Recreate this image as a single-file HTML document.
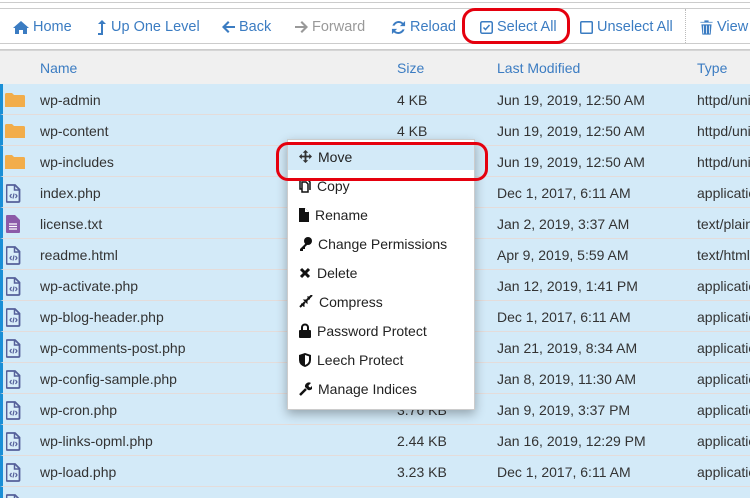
<!DOCTYPE html>
<html style="width:750px;height:498px;overflow:hidden"><head><meta charset="utf-8"><style>
*{margin:0;padding:0;box-sizing:border-box}
body{width:750px;height:498px;overflow:hidden;background:#fff;font-family:"Liberation Sans",sans-serif;font-size:14px;color:#333;position:relative}
.abs{position:absolute}
.tb{position:absolute;top:19px;color:#3b7cc2;font-size:14.5px;white-space:nowrap;display:flex;align-items:center;gap:4px}
.hdr{position:absolute;top:50px;left:0;width:750px;height:34px;background:#f0f0f0;border-top:1px solid #d5d5d5}
.hdr span{position:absolute;top:9px;color:#3b7cc2;font-size:14px}
.row{position:absolute;left:0;width:750px;height:31px;background:#d3eaf8;border-bottom:1px solid #e4dcda;border-left:3px solid #1a8fd6;overflow:hidden}
.row span{position:absolute;top:8px;white-space:nowrap;font-size:14px;color:#333}
.menu{position:absolute;left:287px;top:139px;width:188px;height:271px;background:#fff;border:1px solid #ccc;box-shadow:0 4px 10px rgba(0,0,0,.3)}
.mi{position:absolute;left:0;width:186px;height:27px;display:flex;align-items:center;padding-left:11px;gap:6px;font-size:14px;color:#222;white-space:nowrap}
.mi svg{flex:none}
</style></head><body>
<div class="abs" style="left:0;top:2px;width:750px;height:1px;background:#ccc"></div>
<div class="abs" style="left:0;top:8px;width:750px;height:1px;background:#ccc"></div>
<div class="abs" style="left:0;top:43px;width:750px;height:1px;background:#ccc"></div>
<div class="abs" style="left:685px;top:9px;width:0;height:34px;border-left:1px dotted #bbb"></div>

<div class="tb" style="left:13px"><svg width="16" height="13" viewBox="0 0 16 13"><path d="M8 0L0 7h2v6h4V9h4v4h4V7h2z" fill="#3b7cc2"/></svg>Home</div>
<div class="tb" style="left:97px"><svg width="10" height="15" viewBox="0 0 10 15"><path d="M5 0L1 4h3v9H1v2h5V4h3z" fill="#3b7cc2"/></svg>Up One Level</div>
<div class="tb" style="left:222px"><svg width="13" height="12" viewBox="0 0 13 12"><path d="M6 0L0 6l6 6 1.5-1.5L4 7h9V5H4l3.5-3.5z" fill="#3b7cc2"/></svg>Back</div>
<div class="tb" style="left:295px;color:#999"><svg width="13" height="12" viewBox="0 0 13 12"><path d="M7 0l6 6-6 6-1.5-1.5L9 7H0V5h9L5.5 1.5z" fill="#999"/></svg>Forward</div>
<div class="tb" style="left:391px"><svg width="15" height="15" viewBox="0 0 16 16"><path d="M13 3A7 7 0 0 0 1.5 6h2.3A5 5 0 0 1 11.6 4.4L9.5 6.5H15V1zM3 13a7 7 0 0 0 11.5-3h-2.3a5 5 0 0 1-7.8 1.6l2.1-2.1H1V15z" fill="#3b7cc2"/></svg>Reload</div>
<div class="tb" style="left:480px"><svg width="13" height="13" viewBox="0 0 13 13"><rect x=".75" y=".75" width="11.5" height="11.5" rx="1.5" fill="none" stroke="#3b7cc2" stroke-width="1.5"/><path d="M3.5 6.5l2 2 4-4.5" fill="none" stroke="#3b7cc2" stroke-width="1.5"/></svg>Select All</div>
<div class="tb" style="left:580px"><svg width="13" height="13" viewBox="0 0 13 13"><rect x=".75" y=".75" width="11.5" height="11.5" rx="1" fill="none" stroke="#3b7cc2" stroke-width="1.5"/></svg>Unselect All</div>
<div class="tb" style="left:700px"><svg width="13" height="15" viewBox="0 0 13 15"><path d="M4 0h5v1.5h4V3H0V1.5h4zM1 4h11l-1 11H2zM3.5 5.5v8M6.5 5.5v8M9.5 5.5v8" fill="#3b7cc2" stroke="#fff" stroke-width=".8"/></svg>View</div>

<div class="abs" style="left:462px;top:8px;width:108px;height:36px;border:3px solid #e5000e;border-radius:13px"></div>

<div class="abs" style="left:0;top:49px;width:750px;height:1px;background:#ccc"></div>
<div class="hdr"><span style="left:40px">Name</span><span style="left:397px">Size</span><span style="left:497px">Last Modified</span><span style="left:697px">Type</span></div>

<div id="rows"></div>
<script>
var d=[["f","wp-admin","4 KB","Jun 19, 2019, 12:50 AM","httpd/unix-directory"],
["f","wp-content","4 KB","Jun 19, 2019, 12:50 AM","httpd/unix-directory"],
["f","wp-includes","4 KB","Jun 19, 2019, 12:50 AM","httpd/unix-directory"],
["p","index.php","418 bytes","Dec 1, 2017, 6:11 AM","application/x-php"],
["t","license.txt","19.46 KB","Jan 2, 2019, 3:37 AM","text/plain"],
["p","readme.html","7.26 KB","Apr 9, 2019, 5:59 AM","text/html"],
["p","wp-activate.php","6.71 KB","Jan 12, 2019, 1:41 PM","application/x-php"],
["p","wp-blog-header.php","364 bytes","Dec 1, 2017, 6:11 AM","application/x-php"],
["p","wp-comments-post.php","1.85 KB","Jan 21, 2019, 8:34 AM","application/x-php"],
["p","wp-config-sample.php","2.79 KB","Jan 8, 2019, 11:30 AM","application/x-php"],
["p","wp-cron.php","3.76 KB","Jan 9, 2019, 3:37 PM","application/x-php"],
["p","wp-links-opml.php","2.44 KB","Jan 16, 2019, 12:29 PM","application/x-php"],
["p","wp-load.php","3.23 KB","Dec 1, 2017, 6:11 AM","application/x-php"],
["p","wp-login.php","37.3 KB","Jun 19, 2019, 12:50 AM","application/x-php"]];
var h="";
d.forEach(function(r,i){
var ic;
if(r[0]=="f")ic='<svg style="position:absolute;left:2px;top:9px" width="20" height="14" viewBox="0 0 20 14"><path d="M0 1.5Q0 0 1.5 0H7l2 2h9.5Q20 2 20 3.5V14H0z" fill="#f2ad4a"/></svg>';
else if(r[0]=="t")ic='<svg style="position:absolute;left:3px;top:7px" width="14" height="18" viewBox="0 0 14 18"><path d="M0 1Q0 0 1 0h8l5 5v12q0 1-1 1H1q-1 0-1-1z" fill="#8c5aa8"/><path d="M3 9h8M3 11.5h8M3 14h8" stroke="#fff" stroke-width="1.2"/></svg>';
else ic='<svg style="position:absolute;left:3px;top:7px" width="15" height="19" viewBox="0 0 15 19"><path d="M1.5 1h7.5l4.5 4.5V17q0 1-1 1h-11q-1 0-1-1V2q0-1 1-1z" fill="#fff" fill-opacity=".15" stroke="#55609a" stroke-width="1.8"/><path d="M8.5 1v5h5" fill="none" stroke="#55609a" stroke-width="1.5"/><path d="M5.5 10l-1.5 2 1.5 2M9.5 10l1.5 2-1.5 2M8 9.5l-1 5" fill="none" stroke="#55609a" stroke-width="1.2"/></svg>';
h+='<div class="row" style="top:'+(84+i*31)+'px">'+ic+'<span style="left:37px">'+r[1]+'</span><span style="left:394px">'+r[2]+'</span><span style="left:494px">'+r[3]+'</span><span style="left:694px">'+r[4]+'</span></div>';
});
document.getElementById("rows").innerHTML=h;
</script>

<div class="menu">
<div class="mi" style="top:3px;background:#d3eaf8"><svg width="13" height="13" viewBox="0 0 14 14"><path d="M7 0l3 3H8v3h3V4l3 3-3 3V8H8v3h2l-3 3-3-3h2V8H3v2L0 7l3-3v2h3V3H4z" fill="#333"/></svg>Move</div>
<div class="mi" style="top:32px"><svg width="12" height="14" viewBox="0 0 12 14"><path d="M3 3h4l2 2v8H3z M1 1h4" fill="none" stroke="#111" stroke-width="1.5"/><path d="M1 1v9h2" fill="none" stroke="#111" stroke-width="1.5"/><path d="M5 1h4l2 2v8" fill="none" stroke="#111" stroke-width="1.5"/></svg>Copy</div>
<div class="mi" style="top:61px"><svg width="10" height="14" viewBox="0 0 10 14"><path d="M0 0h6l4 4v10H0z" fill="#111"/><path d="M6 0v4h4" fill="#fff"/></svg>Rename</div>
<div class="mi" style="top:90px"><svg width="13" height="14" viewBox="0 0 13 14"><circle cx="9" cy="4" r="4" fill="#111"/><path d="M7 6L1 12v2h3v-2h2v-2l3-3z" fill="#111"/></svg>Change Permissions</div>
<div class="mi" style="top:119px"><svg width="12" height="12" viewBox="0 0 12 12"><path d="M2 2l8 8M10 2l-8 8" stroke="#111" stroke-width="3"/></svg>Delete</div>
<div class="mi" style="top:148px"><svg width="14" height="13" viewBox="0 0 14 13"><path d="M1 12l5-5M8 5l5-5" stroke="#111" stroke-width="2"/><path d="M5 5h3v3z M9 4h2M9 1v3M2 9h3v3" fill="#111" stroke="#111"/></svg>Compress</div>
<div class="mi" style="top:177px"><svg width="12" height="15" viewBox="0 0 12 15"><path d="M3 7V4.5a3 3 0 0 1 6 0V7" fill="none" stroke="#111" stroke-width="2"/><rect x="0" y="7" width="12" height="8" rx="1" fill="#111"/></svg>Password Protect</div>
<div class="mi" style="top:206px"><svg width="12" height="14" viewBox="0 0 12 14"><path d="M6 0l6 2v5q0 5-6 7Q0 12 0 7V2z" fill="#111"/><path d="M6 2l4 1.4V7q0 3.5-4 5z" fill="#fff"/></svg>Leech Protect</div>
<div class="mi" style="top:235px"><svg width="13" height="14" viewBox="0 0 13 14"><path d="M1 13l6-6" stroke="#111" stroke-width="2.5"/><path d="M6 5a4 4 0 0 1 6-4L9.5 3.5 10 5l1.5.5L14 3a4 4 0 0 1-5 5z" fill="#111"/></svg>Manage Indices</div>
</div>

<div class="abs" style="left:276px;top:142px;width:212px;height:39px;border:3px solid #e5000e;border-radius:12px"></div>
</body></html>
